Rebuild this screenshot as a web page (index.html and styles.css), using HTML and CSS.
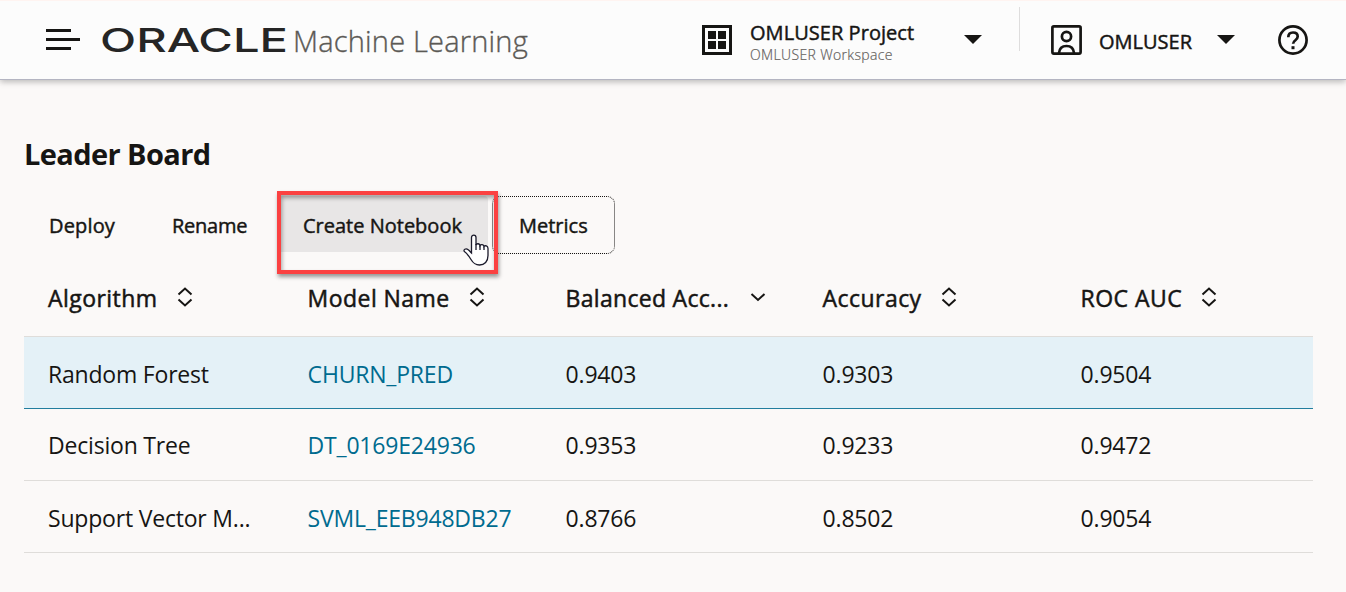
FILE: index.html
```html
<!DOCTYPE html>
<html lang="en">
<head>
<meta charset="utf-8">
<title>Oracle Machine Learning - Leader Board</title>
<link rel="stylesheet" href="styles.css">
</head>
<body>
<svg class="defs" aria-hidden="true">
  <symbol id="sort" viewBox="0 0 16 20"><path d="M1.500 7.500 8 1.500 14.500 7.500M1.500 12.500 8 18.500 14.500 12.500"/></symbol>
  <symbol id="desc" viewBox="0 0 16 20"><path d="M1.500 7 8 13 14.500 7"/></symbol>
</svg>
<header class="topbar">
  <svg class="menu" width="34" height="22" viewBox="0 0 34 22"><path d="M0 1.500h25M0 10.500h34M0 19.500h25" stroke="#161513" stroke-width="3"/></svg>
  <svg class="logo" width="190" height="44" viewBox="0 0 190 44"><text class="wordmark" x="0" y="34" textLength="188" lengthAdjust="spacingAndGlyphs">ORACLE</text></svg>
  <span class="product">Machine Learning</span>
  <div class="project">
    <svg width="30" height="30" viewBox="0 0 30 30"><path d="M1.500 1.500h27v27h-27z" fill="none" stroke="#161513" stroke-width="3"/><path d="M6 6h8v8H6zM16 6h8v8h-8zM6 16h8v8H6zM16 16h8v8h-8z" fill="#161513"/></svg>
    <div class="project-names"><span class="project-name">OMLUSER Project</span><span class="workspace">OMLUSER Workspace</span></div>
    <svg class="caret" width="18" height="9" viewBox="0 0 18 9"><path d="M0 0h18L9 9z"/></svg>
  </div>
  <div class="divider"></div>
  <div class="user">
    <svg width="31" height="30" viewBox="0 0 31 30" fill="none" stroke="#161513" stroke-width="2.700"><rect x="1.400" y="1.400" width="28.200" height="27.200" rx="1.500"/><circle cx="15.500" cy="11.500" r="4.600"/><path d="M8 28c.4-4.500 3.200-7 7.500-7s7.100 2.500 7.500 7"/></svg>
    <span class="user-name">OMLUSER</span>
    <svg class="caret" width="18" height="9" viewBox="0 0 18 9"><path d="M0 0h18L9 9z"/></svg>
  </div>
  <svg class="help" width="30" height="30" viewBox="0 0 30 30" fill="none" stroke="#161513" stroke-width="2.700"><circle cx="15" cy="15" r="13.600"/><path d="M10.300 12.200c0-3 1.900-4.700 4.700-4.700s4.700 1.600 4.700 4.100c0 3.700-4.600 3.500-4.600 7.200"/><path d="M13.500 22.700h3" stroke-width="3"/></svg>
</header>
<main class="content">
  <h1 class="title">Leader Board</h1>
  <div class="toolbar">
    <button class="btn deploy">Deploy</button>
    <button class="btn rename">Rename</button>
    <div class="create-wrap">
      <button class="btn create">Create Notebook</button>
      <div class="highlight"></div>
      <svg class="hand" width="26" height="32" viewBox="0 0 26 32"><path d="M8.500 19V3.500C8.500 .3 13 .3 13 3.500V11c.8-2 3.800-1.500 4 .6.900-1.700 3.700-1.200 4 .8 1-1.200 4-.7 4 2v7.200c0 6-3.500 9.400-8.500 9.400-4.500 0-6.500-2-8.500-5.500-1.800-3-3.500-5.500-6.300-7.700C-.5 15.500 3 14 5.200 15.700c1.300 1 2 2 3.300 3.300z" fill="#fff" stroke="#1b1a2b" stroke-width="1.300"/><path d="M13 10v6M17 11.500V16M21 12.500V16" fill="none" stroke="#1b1a2b" stroke-width="1.300"/></svg>
    </div>
    <button class="btn metrics">Metrics</button>
  </div>
  <div class="table">
    <div class="row head">
      <div class="cell"><span>Algorithm</span><svg class="sort"><use href="#sort"/></svg></div>
      <div class="cell"><span>Model Name</span><svg class="sort"><use href="#sort"/></svg></div>
      <div class="cell"><span class="h-balanced">Balanced Acc...</span><svg class="sort"><use href="#desc"/></svg></div>
      <div class="cell"><span class="h-accuracy">Accuracy</span><svg class="sort"><use href="#sort"/></svg></div>
      <div class="cell"><span>ROC AUC</span><svg class="sort"><use href="#sort"/></svg></div>
    </div>
    <div class="row selected"><div class="cell">Random Forest</div><div class="cell"><a class="link">CHURN_PRED</a></div><div class="cell">0.9403</div><div class="cell">0.9303</div><div class="cell">0.9504</div></div>
    <div class="row second"><div class="cell">Decision Tree</div><div class="cell"><a class="link">DT_0169E24936</a></div><div class="cell">0.9353</div><div class="cell">0.9233</div><div class="cell">0.9472</div></div>
    <div class="row"><div class="cell">Support Vector M...</div><div class="cell"><a class="link">SVML_EEB948DB27</a></div><div class="cell">0.8766</div><div class="cell">0.8502</div><div class="cell">0.9054</div></div>
  </div>
</main>
</body>
</html>
```
FILE: styles.css
```css
* { box-sizing: border-box; }
body { margin: 0; height: 592px; overflow: hidden; background: #fbf9f8; color: #161513; font-family: "Open Sans", "Noto Sans", sans-serif; }
.defs { display: none; }
svg { display: block; flex: none; }
.topbar { display: flex; align-items: center; height: 80px; padding: 0 38px 0 46px; background: #fcfcfc; border-top: 1px solid #fff4f1; border-bottom: 1px solid #b4b5c2; box-shadow: 0 2px 6px rgba(0, 0, 0, .26); white-space: nowrap; }
.logo { margin-left: 20px; overflow: visible; }
.wordmark { font: 500 33px Inter, sans-serif; fill: #252525; }
.product { width: 240px; margin-left: 3px; font-size: 29px; font-weight: 300; letter-spacing: .2px; color: #5b5955; -webkit-text-stroke: .35px; }
.project { display: flex; align-items: center; margin-left: 169px; }
.project-names { display: flex; flex-direction: column; width: 185px; margin-left: 18px; padding-top: 6px; }
.project-name { font-size: 20px; line-height: 22px; letter-spacing: .05px; -webkit-text-stroke: .45px; }
.workspace { font-size: 14px; line-height: 21px; letter-spacing: .35px; color: #65625e; font-weight: 300; -webkit-text-stroke: .2px; }
.caret { margin: -2px 0 0 29px; fill: #161513; }
.divider { width: 1px; height: 44px; margin: -22px 31px 0 37px; background: #dedddd; }
.user { display: flex; align-items: center; }
.user-name { width: 94px; margin-left: 17px; font-size: 20px; padding-top: 3px; -webkit-text-stroke: .45px; }
.user .caret { margin-left: 24px; }
.help { margin-left: auto; }
.content { padding: 54px 33px 0 24px; }
.title { margin: 0; font-size: 29px; font-weight: 700; line-height: 40px; letter-spacing: -.6px; }
.toolbar { display: flex; height: 58px; margin-top: 22px; }
.btn { display: block; height: 58px; margin: 0; padding: 2px 0 0 25px; border: 0; background: none; color: #161513; font: 400 20px/56px "Open Sans", sans-serif; -webkit-text-stroke: .45px; text-align: left; white-space: nowrap; }
.deploy { width: 123px; letter-spacing: .15px; }
.rename { width: 131px; letter-spacing: -.25px; }
.create-wrap { position: relative; width: 214px; }
.create { width: 210px; height: 56px; background: #e8e6e6; border-radius: 4px; }
.highlight { position: absolute; left: -1px; top: -5px; width: 221px; height: 83px; border: 4px solid #fb4141; box-shadow: 1px 3px 4px rgba(0, 0, 0, .4), inset 1px 3px 4px rgba(0, 0, 0, .35); z-index: 1; }
.hand { position: absolute; left: 185px; top: 38px; z-index: 2; }
.metrics { width: 123px; border: 1px dotted #161513; border-radius: 8px; line-height: 54px; padding-left: 26px; }
.table { margin-top: 10px; }
.row { display: grid; grid-template-columns: 259px 258px 257px 258px 1fr; align-items: center; height: 72px; padding: 2px 0 0 24px; border-bottom: 1px solid #dfddda; font-size: 23px; letter-spacing: -.2px; }
.cell { display: flex; align-items: center; white-space: nowrap; }
.cell + .cell { padding-left: .6px; }
.head { height: 73px; padding: 0 0 4px 24px; letter-spacing: .45px; -webkit-text-stroke: .5px; }
.h-balanced { letter-spacing: .3px; }
.selected { background: #e4f1f7; border-color: #227e9e; }
.second { padding-top: 0; }
.sort { width: 16px; height: 20px; margin: -2px 0 0 19px; fill: none; stroke: #161513; stroke-width: 2; -webkit-text-stroke: 0; }
.h-balanced + .sort { margin-left: 21px; }
.link { color: #006b8f; }
```
